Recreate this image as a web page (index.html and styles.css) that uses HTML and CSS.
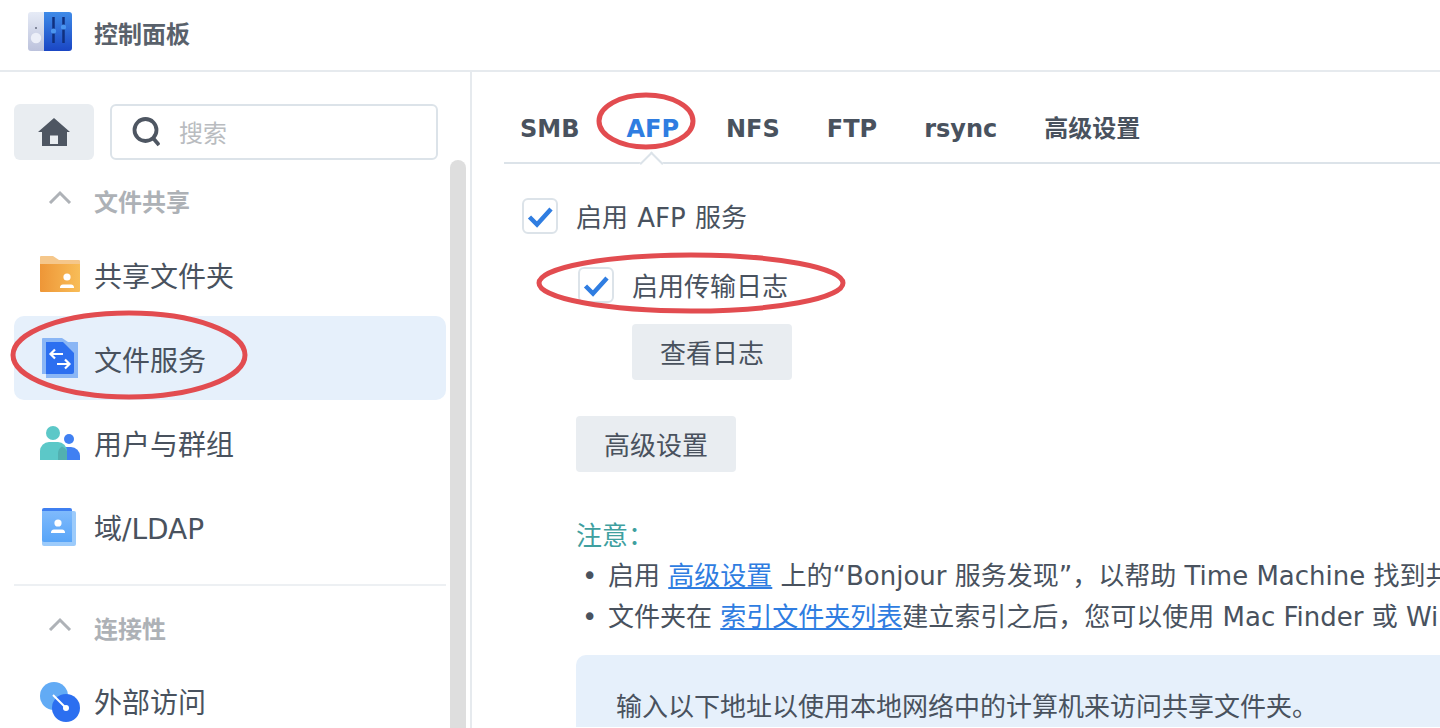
FILE: index.html
```html
<!DOCTYPE html>
<html lang="zh-CN">
<head>
    <meta charset="utf-8">
    <title>控制面板</title>
    <link rel="stylesheet" href="styles.css">
</head>
<body>
    <header class="titlebar">
        <svg class="app-icon" viewBox="0 0 44 40">
            <defs>
                <linearGradient id="appBlue" x1="0" y1="0" x2="0" y2="1">
                    <stop offset="0" stop-color="#3f8be8"/>
                    <stop offset="1" stop-color="#1a46c4"/>
                </linearGradient>
                <linearGradient id="appGrey" x1="0" y1="0" x2="0" y2="1">
                    <stop offset="0" stop-color="#e6ebf6"/>
                    <stop offset="1" stop-color="#bcc2dc"/>
                </linearGradient>
            </defs>
            <path d="M3 0H16V39H3a3 3 0 0 1-3-3V3a3 3 0 0 1 3-3z" fill="url(#appGrey)"/>
            <path d="M16 0H41a3 3 0 0 1 3 3V36a3 3 0 0 1-3 3H16z" fill="url(#appBlue)"/>
            <circle cx="8" cy="16" r="1" fill="#666c80"/>
            <circle cx="8" cy="26" r="5.2" fill="#eceff8"/>
            <path d="M25.500 5V31M35.500 5V31" stroke="#10307f" stroke-width="2.500"/>
            <circle cx="25.500" cy="19" r="2.600" fill="#4b95ee"/>
            <circle cx="35.500" cy="15" r="2.600" fill="#4b95ee"/>
        </svg>
        <span class="app-title">控制面板</span>
    </header>

    <div class="window">
        <aside class="sidebar">
            <div class="sidebar-inner">
                <div class="search-row">
                    <button class="home-btn">
                        <svg width="34" height="30" viewBox="0 0 34 30"><path fill-rule="evenodd" d="M17 1L33 15H30V29H5V15H1zM13 18.500V27H21V18.500z" fill="#4e5662"/></svg>
                    </button>
                    <div class="search-box">
                        <svg width="28" height="30" viewBox="0 0 28 30" fill="none" stroke="#4e5662" stroke-width="3.800"><circle cx="13.500" cy="13" r="11"/><path d="M21 21L27 28"/></svg>
                        <span class="search-hint">搜索</span>
                    </div>
                </div>

                <div class="section-title">
                    <svg width="24" height="14" viewBox="0 0 24 14" fill="none" stroke="#aeb2b7" stroke-width="3"><path d="M2 13L12 3L22 13"/></svg>
                    <span>文件共享</span>
                </div>
                <a class="nav-item">
                    <svg class="nav-icon" viewBox="0 0 40 40">
                        <defs><linearGradient id="folder" x1="0" y1="0" x2="1" y2="0"><stop offset="0" stop-color="#ee9637"/><stop offset="1" stop-color="#f8bd58"/></linearGradient></defs>
                        <g transform="translate(0 2)">
                            <path d="M0 1a1 1 0 0 1 1-1H13L19 4H39a1 1 0 0 1 1 1V12H0z" fill="#f5c78b"/>
                            <path d="M0 8H40V35a1 1 0 0 1-1 1H1a1 1 0 0 1-1-1z" fill="url(#folder)"/>
                            <circle cx="27" cy="21" r="3.600" fill="#fff"/>
                            <path d="M20 32a3 3 0 0 1 3-3.500H31a3 3 0 0 1 3 3.500z" fill="#fff"/>
                        </g>
                    </svg>
                    <span>共享文件夹</span>
                </a>
                <a class="nav-item active">
                    <svg class="nav-icon" viewBox="0 0 40 40">
                        <path d="M2 1a1 1 0 0 1 1-1H22L28 4H38V40H6V36H2z" fill="#8ab6f5"/>
                        <path d="M6 4H23L34 15V34a2 2 0 0 1-2 2H6z" fill="#2c6ff0"/>
                        <path d="M23 16H11M15 11.500L10.500 16L15 20.500M17 26H29.500M25 21.500L29.500 26L25 30.500" fill="none" stroke="#fff" stroke-width="2.200"/>
                    </svg>
                    <span>文件服务</span>
                </a>
                <a class="nav-item">
                    <svg class="nav-icon" viewBox="0 0 40 40">
                        <g transform="translate(0 4)">
                            <circle cx="13" cy="7" r="7" fill="#5cc8c8"/>
                            <circle cx="29" cy="13" r="5" fill="#4080f2"/>
                            <path d="M18 34V26a9 9 0 0 1 4-5H31a9 9 0 0 1 9 9V34z" fill="#4080f2"/>
                            <path d="M0 34V25a9 9 0 0 1 9-9H18a9 9 0 0 1 9 9V34z" fill="#5cc8c8"/>
                            <path d="M18 34V27a8 8 0 0 1 4-6.500a9 9 0 0 1 5 4.500V34z" fill="#52b0b0"/>
                        </g>
                    </svg>
                    <span>用户与群组</span>
                </a>
                <a class="nav-item">
                    <svg class="nav-icon" viewBox="0 0 40 40">
                        <defs><linearGradient id="book" x1="0" y1="0" x2="0" y2="1"><stop offset="0" stop-color="#7fbafc"/><stop offset="1" stop-color="#58a5f8"/></linearGradient></defs>
                        <g transform="translate(0 2)">
                            <path d="M4 0H30a2 2 0 0 1 2 2V4H2V2a2 2 0 0 1 2-2z" fill="#3f7ff0"/>
                            <path d="M2 3H34a2 2 0 0 1 2 2V36a2 2 0 0 1-2 2H4a2 2 0 0 1-2-2z" fill="#9ccbfb"/>
                            <path d="M2 3H32V34H4a2 2 0 0 1-2-2z" fill="url(#book)"/>
                            <circle cx="18" cy="15" r="3.600" fill="#fff"/>
                            <path d="M11 25a3 3 0 0 1 3-3.500H22a3 3 0 0 1 3 3.500z" fill="#fff"/>
                        </g>
                    </svg>
                    <span>域/LDAP</span>
                </a>

                <div class="nav-divider"></div>

                <div class="section-title second">
                    <svg width="24" height="14" viewBox="0 0 24 14" fill="none" stroke="#aeb2b7" stroke-width="3"><path d="M2 13L12 3L22 13"/></svg>
                    <span>连接性</span>
                </div>
                <a class="nav-item last">
                    <svg class="nav-icon" viewBox="0 0 40 40">
                        <circle cx="14" cy="14" r="14" fill="#62abf5"/>
                        <circle cx="26" cy="26" r="14" fill="#2c6ff0"/>
                        <path d="M13 13L26 26" stroke="#fff" stroke-width="2"/>
                        <circle cx="26" cy="26" r="3" fill="#fff"/>
                    </svg>
                    <span>外部访问</span>
                </a>
            </div>
            <div class="sidebar-scroll"></div>
        </aside>

        <main class="content">
            <nav class="tabs">
                <a class="tab">SMB</a>
                <a class="tab current">AFP</a>
                <a class="tab">NFS</a>
                <a class="tab">FTP</a>
                <a class="tab">rsync</a>
                <a class="tab">高级设置</a>
            </nav>

            <div class="pane">
                <label class="check">
                    <span class="box"><svg width="30" height="30" viewBox="0 0 30 30"><path d="M4.500 16L12 23.500L26 8" fill="none" stroke="#2f7de1" stroke-width="4.500"/></svg></span>
                    <span class="check-text spaced">启用 AFP 服务</span>
                </label>
                <div class="sub-options">
                    <label class="check">
                        <span class="box"><svg width="30" height="30" viewBox="0 0 30 30"><path d="M4.500 16L12 23.500L26 8" fill="none" stroke="#2f7de1" stroke-width="4.500"/></svg></span>
                        <span class="check-text">启用传输日志</span>
                    </label>
                    <button class="btn log-btn">查看日志</button>
                </div>
                <button class="btn adv-btn">高级设置</button>

                <div class="note-title">注意：</div>
                <ul class="notes">
                    <li>启用 <a>高级设置</a> 上的“Bonjour 服务发现”，以帮助 Time Machine 找到共</li>
                    <li>文件夹在 <a>索引文件夹列表</a>建立索引之后，您可以使用 Mac Finder 或 Wi</li>
                </ul>
                <div class="address-box">输入以下地址以使用本地网络中的计算机来访问共享文件夹。</div>
            </div>
        </main>
    </div>

    <!-- red annotations drawn on top of the screenshot -->
    <svg class="marks" width="1440" height="728" viewBox="0 0 1440 728" fill="none" stroke="#e24c50" stroke-width="5">
        <ellipse cx="129" cy="355" rx="116" ry="42"/>
        <ellipse cx="646" cy="121" rx="47" ry="26"/>
        <ellipse cx="691" cy="283" rx="152" ry="28"/>
    </svg>
</body>
</html>
```

FILE: styles.css
```css
* {
    box-sizing: border-box;
}
html, body {
    height: 100%;
}
body {
    margin: 0;
    overflow: hidden;
    background: #fff;
    color: #49525e;
    font-family: "DejaVu Sans", "Noto Sans CJK SC", sans-serif;
    font-size: 26px;
}

.titlebar {
    height: 72px;
    display: flex;
    align-items: center;
    padding: 0 0 6px 28px;
    border-bottom: 2px solid #e6eaee;
}
.app-icon {
    width: 44px;
    height: 40px;
    margin-right: 22px;
}
.app-title {
    font-size: 24px;
    font-weight: 700;
    color: #59616b;
}

.window {
    display: flex;
    height: 656px;
}

/* sidebar */
.sidebar {
    width: 472px;
    flex: none;
    border-right: 2px solid #e6eaee;
    display: flex;
    padding-left: 14px;
}
.sidebar-inner {
    width: 432px;
    flex: none;
    padding-top: 32px;
}
.sidebar-scroll {
    width: 16px;
    margin: 88px 0 0 4px;
    background: #dedede;
    border-radius: 8px 8px 0 0;
}
.search-row {
    display: flex;
    gap: 16px;
    height: 56px;
    padding-right: 8px;
}
.home-btn {
    width: 80px;
    border: 0;
    padding: 0;
    background: #e9edf1;
    border-radius: 6px;
    display: flex;
    align-items: center;
    justify-content: center;
}
.search-box {
    flex: 1;
    display: flex;
    align-items: center;
    gap: 19px;
    padding-left: 20px;
    border: 2px solid #dce3e9;
    border-radius: 6px;
}
.search-hint {
    color: #b9bcc0;
    font-size: 24px;
    padding-bottom: 2px;
}
.section-title {
    height: 72px;
    display: flex;
    align-items: center;
    padding: 24px 0 16px 34px;
    gap: 22px;
    font-size: 24px;
    font-weight: 700;
    color: #adb1b6;
}
.section-title svg {
    margin-top: -6px;
}
.section-title.second {
    padding: 16px 0 6px 34px;
}
.nav-item {
    height: 84px;
    display: flex;
    align-items: center;
    padding: 0 0 0 26px;
    gap: 14px;
    font-size: 28px;
    border-radius: 10px;
}
.nav-item span {
    padding-top: 2px;
}
.nav-item.active {
    background: #e6f0fb;
}
.nav-item.last {
    height: 65px;
    padding-top: 22px;
}
.nav-item.last span {
    padding: 0 0 2px;
}
.nav-icon {
    width: 40px;
    height: 40px;
    flex: none;
}
.nav-divider {
    height: 2px;
    margin-top: 16px;
    background: #edf0f3;
}

/* main area */
.content {
    flex: 1;
    min-width: 0;
    padding-left: 32px;
}
.tabs {
    height: 92px;
    display: flex;
    align-items: center;
    gap: 47px;
    padding: 23px 0 0 16px;
    border-bottom: 2px solid #dce3e9;
    position: relative;
}
/* little notch in the line under the current tab */
.tabs::after {
    content: "";
    position: absolute;
    left: 139px;
    bottom: -10px;
    width: 17px;
    height: 17px;
    box-sizing: border-box;
    background: #fff;
    border-left: 2px solid #dce3e9;
    border-top: 2px solid #dce3e9;
    transform: rotate(45deg);
}
.tab {
    font-size: 24px;
    line-height: 32px;
    font-weight: 700;
    color: #49525e;
}
.tab.current {
    color: #2f7de1;
}
.pane {
    padding: 33px 0 0 18px;
}
.check {
    display: flex;
    align-items: center;
    height: 38px;
    gap: 18px;
}
.check-text {
    padding-bottom: 2px;
}
.box {
    width: 36px;
    height: 36px;
    flex: none;
    border: 2px solid #dce3e9;
    border-radius: 6px;
    display: flex;
    align-items: center;
    justify-content: center;
}
.spaced {
    word-spacing: 1px;
}
.sub-options {
    padding: 31px 0 0 56px;
}
.btn {
    display: block;
    width: 160px;
    height: 56px;
    border: 0;
    padding: 0 0 2px;
    background: #e9edf1;
    border-radius: 4px;
    font: inherit;
    color: inherit;
}
.log-btn {
    margin: 20px 0 0 54px;
}
.adv-btn {
    margin: 36px 0 0 54px;
}
.note-title {
    margin: 45px 0 0 54px;
    line-height: 38px;
    color: #3f9f9f;
}
.notes {
    list-style: none;
    margin: 1px 0 0 54px;
    padding: 0;
    white-space: nowrap;
    line-height: 41px;
}
.notes li::before {
    content: "•";
    display: inline-block;
    width: 26px;
    padding-left: 6px;
}
.notes a {
    color: #2f7de1;
    text-decoration: underline;
}
.address-box {
    margin: 17px 0 0 54px;
    padding: 31px 40px 0;
    height: 72px;
    background: #e6f0fb;
    border-radius: 10px 0 0 0;
}

.marks {
    position: absolute;
    left: 0;
    top: 0;
    pointer-events: none;
}
```
